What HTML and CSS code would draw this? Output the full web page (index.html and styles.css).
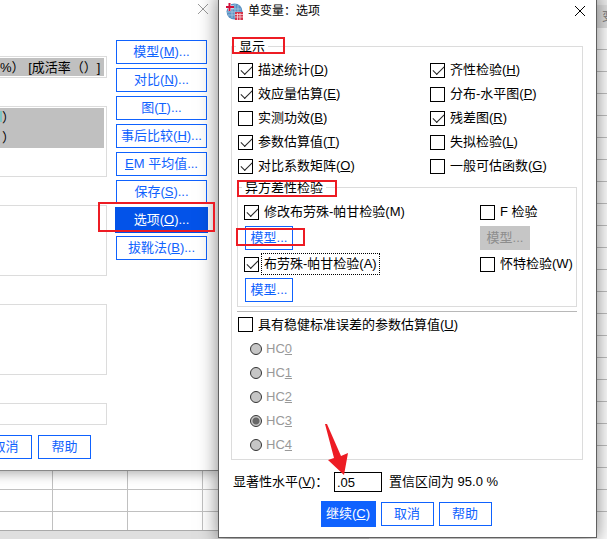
FILE: index.html
```html
<!DOCTYPE html>
<html lang="zh-CN">
<head>
<meta charset="utf-8">
<title>单变量：选项</title>
<link rel="stylesheet" href="styles.css">
</head>
<body>
<div class="desktop">
  <div class="sheet"><div class="sheet-head">变</div><div class="sheet-rows"></div><div class="sheet-foot"></div></div>
  <div class="side-rows"></div>

  <section class="window parent">
    <header class="parent-title">
      <button class="close muted" aria-label="关闭"><svg viewBox="0 0 12 12"><path d="M1 1l10 10M11 1L1 11"/></svg></button>
    </header>
    <div class="parent-body">
      <div class="fields">
        <div class="box single"><div class="hl">%） [成活率（）]</div></div>
        <div class="box factors"><div class="hl"><span class="teal"></span>）</div><div class="hl">）</div></div>
        <div class="box covariates"></div>
        <div class="box random"></div>
        <div class="box single weight"></div>
      </div>
      <nav class="actions">
        <button class="btn">模型(<u>M</u>)...</button>
        <button class="btn">对比(<u>N</u>)...</button>
        <button class="btn">图(<u>T</u>)...</button>
        <button class="btn">事后比较(<u>H</u>)...</button>
        <button class="btn"><u>E</u>M 平均值...</button>
        <button class="btn">保存(<u>S</u>)...</button>
        <button class="btn active">选项(<u>O</u>)...</button>
        <button class="btn">拔靴法(<u>B</u>)...</button>
      </nav>
    </div>
    <footer class="parent-foot"><button class="btn small">取消</button><button class="btn small">帮助</button></footer>
  </section>

  <section class="window dialog">
    <header class="title">
      <svg class="logo" viewBox="0 0 17 17"><circle cx="8.500" cy="8.500" r="8" fill="#5b93c4"/><path d="M2 6h13M1 9h14M2 12h12M6 3v12M9 1v14M12 2v12" stroke="#a9c8e2" stroke-width=".8" fill="none"/><path d="M9 9h8v8H9z" fill="#d3354b"/><path d="M9 11.500h8M9 14h8M11.500 10v7M14 10v7" stroke="#f7d5da" stroke-width=".8"/><path d="M3.500 0v8M0 4h8" stroke="#fff" stroke-width="3"/><path d="M3.500 0v8M0 4h8" stroke="#d0103a" stroke-width="2"/></svg>
      <h1>单变量：选项</h1>
      <button class="close" aria-label="关闭"><svg viewBox="0 0 12 12"><path d="M1 1l10 10M11 1L1 11"/></svg></button>
    </header>
    <form class="form">
      <fieldset class="group display">
        <legend>显示</legend>
        <div class="checks">
          <label class="opt"><input type="checkbox" checked>描述统计(<u>D</u>)</label>
          <label class="opt"><input type="checkbox" checked>齐性检验(<u>H</u>)</label>
          <label class="opt"><input type="checkbox" checked>效应量估算(<u>E</u>)</label>
          <label class="opt"><input type="checkbox">分布-水平图(<u>P</u>)</label>
          <label class="opt"><input type="checkbox">实测功效(<u>B</u>)</label>
          <label class="opt"><input type="checkbox" checked>残差图(<u>R</u>)</label>
          <label class="opt"><input type="checkbox" checked>参数估算值(<u>T</u>)</label>
          <label class="opt"><input type="checkbox">失拟检验(<u>L</u>)</label>
          <label class="opt"><input type="checkbox" checked>对比系数矩阵(<u>O</u>)</label>
          <label class="opt"><input type="checkbox">一般可估函数(<u>G</u>)</label>
        </div>
        <fieldset class="group hetero">
          <legend>异方差性检验</legend>
          <div class="tests">
            <label class="opt"><input type="checkbox" checked>修改布劳殊-帕甘检验(M)</label>
            <label class="opt"><input type="checkbox">F 检验</label>
            <button type="button" class="btn model">模型...</button>
            <button type="button" class="btn model off" disabled>模型...</button>
            <label class="opt"><input type="checkbox" checked><span class="focused">布劳殊-帕甘检验(A)</span></label>
            <label class="opt"><input type="checkbox">怀特检验(W)</label>
            <button type="button" class="btn model">模型...</button>
          </div>
        </fieldset>
        <hr>
        <label class="opt robust"><input type="checkbox">具有稳健标准误差的参数估算值(<u>U</u>)</label>
        <div class="radios">
          <label class="opt"><input type="radio" name="hc" disabled>HC<u>0</u></label>
          <label class="opt"><input type="radio" name="hc" disabled>HC<u>1</u></label>
          <label class="opt"><input type="radio" name="hc" disabled>HC<u>2</u></label>
          <label class="opt"><input type="radio" name="hc" disabled checked>HC<u>3</u></label>
          <label class="opt"><input type="radio" name="hc" disabled>HC<u>4</u></label>
        </div>
      </fieldset>
      <div class="level"><label for="sig">显著性水平(<u>V</u>)：</label><input id="sig" type="text" value=".05"><span>置信区间为 95.0 %</span></div>
      <div class="buttons"><button type="button" class="btn primary">继续(<u>C</u>)</button><button type="button" class="btn small">取消</button><button type="button" class="btn small">帮助</button></div>
    </form>
  </section>

  <div class="mark mark-options"></div>
  <div class="mark mark-display"></div>
  <div class="mark mark-hetero"></div>
  <div class="mark mark-model"></div>
  <svg class="arrow" viewBox="0 0 23 52"><path d="M0 0H2L16 32L23 29L19 51L3 36L9 34Z" fill="#ed1c24"/></svg>
</div>
</body>
</html>
```
FILE: styles.css
```css
* { box-sizing: border-box; }
body { margin: 0; text-spacing-trim: space-all; }
body, button, input { font: 13px/16px "Liberation Sans", "Noto Sans CJK SC", sans-serif; color: #000; }
.desktop { position: relative; height: 100vh; overflow: hidden; background: #fff; }

.sheet { height: 100%; display: flex; flex-direction: column; }
.sheet-head { height: 28px; padding: 4px 0 0 602px; border-top: 5px solid #eee; background: #e0e0e0; color: #777; white-space: nowrap; font-size: 12px; }
.sheet-rows { flex: 1; background:
  repeating-linear-gradient(to bottom, transparent 0 21px, #c0c0c0 21px 22px),
  repeating-linear-gradient(to right, transparent 0 74px, #c0c0c0 74px 75px) -22px 0; }
.sheet-foot { height: 9px; background: #dfdfdf; border-top: 1px solid #aaa; }
.side-rows { position: absolute; left: 369px; right: 0; top: 28px; bottom: 0;
  background: repeating-linear-gradient(to bottom, #fff 0 21px, #c0c0c0 21px 22px) 0 0 / 100% 484px no-repeat, #fff; }

.window { position: absolute; background: #fff; }
.parent { left: -40px; top: -20px; width: 259px; height: 491px; border-bottom: 1px solid #888; box-shadow: 0 2px 12px rgba(0, 0, 0, .35); padding-left: 40px; }
.parent-title { display: flex; justify-content: flex-end; padding: 23px 10px 0 0; height: 60px; }
.close { border: 0; padding: 0; background: none; width: 12px; height: 12px; }
.close svg { display: block; width: 12px; height: 12px; stroke: #000; stroke-width: 1; fill: none; }
.muted svg { stroke: #999; }
.parent-body { display: flex; gap: 9px; }
.fields { width: 107px; padding-top: 16px; display: flex; flex-direction: column; }
.box { border: 1px solid #dcdcdc; border-left: 0; padding: 1px 2px 1px 0; }
.single { height: 22px; }
.hl { background: #c0c0c0; height: 20px; line-height: 20px; padding-left: 2px; white-space: nowrap; overflow: hidden; }
.single .hl { height: 18px; padding-left: 0; }
.factors { height: 71px; margin-top: 28px; }
.teal { display: inline-block; width: 2px; height: 11px; margin-left: -2px; background: #7fc4c4; }
.covariates { height: 71px; margin-top: 28px; }
.random { height: 71px; margin-top: 28px; }
.weight { margin-top: 28px; }
.actions { width: 91px; display: grid; gap: 4px; align-content: start; }
.btn { height: 24px; border: 1px solid #0f62fe; background: #fff; color: #0f62fe; padding: 0; white-space: nowrap; }
.active { background: #0353e9; border-color: #0353e9; color: #fff; outline: 1px solid #0353e9; }
.small { width: 53px; }
.parent-foot { display: flex; gap: 6px; margin: 10px 0 0 -21px; }

.dialog { left: 218px; top: -8px; width: 379px; height: 546px; border: 1px solid #606060; box-shadow: 0 2px 18px rgba(0, 0, 0, .5); }
.title { display: flex; align-items: center; height: 44px; padding: 0 10px 8px 7px; gap: 5px; }
.title h1 { flex: 1; margin: 0; font-size: 12px; font-weight: 400; }
.logo { width: 17px; height: 17px; }
.form { padding: 0 13px 0 12px; }
.group { margin: 0; min-width: 0; border: 1px solid #dcdcdc; padding: 0; }
.group legend { margin-left: 4px; padding: 2px 3px 0; line-height: 16px; }
.display { padding: 3px 5px 0; }
.display > legend { margin-left: -1px; }
.checks { display: grid; grid-template-columns: 192px 1fr; grid-auto-rows: 24px; }
.opt { display: flex; align-items: center; white-space: nowrap; }
input[type=checkbox], input[type=radio] { appearance: none; margin: 0 5px 0 1px; width: 15px; height: 15px; flex: none; border: 1px solid #000; background: #fff; }
input[type=checkbox]:checked { position: relative; }
input[type=checkbox]:checked::after { content: ""; position: absolute; left: 2px; top: 2px; width: 10px; height: 5px; border: solid #222; border-width: 0 0 1px 1px; transform: rotate(-45deg); }
.hetero { height: 129px; }
.tests { display: grid; grid-template-columns: 236px 1fr; grid-template-rows: 28px 24px 28px 24px; padding: 2px 0 0 5px; }
.tests .model { width: 48px; margin-left: 2px; }
.tests .off { width: 50px; margin-left: 1px; background: #c6c6c6; border-color: #c6c6c6; color: #8d8d8d; }
.focused { outline: 1px dotted #000; outline-offset: 2px; }
hr { margin: 4px 0 0; border: 0; border-top: 1px solid #b8b8b8; }
.robust { height: 25px; }
.radios { display: grid; grid-auto-rows: 24px; padding: 0 0 2px 12px; color: #999; }
input[type=radio] { width: 12px; height: 12px; margin: 0 4px 0 1px; border-radius: 50%; border-color: #333; background: #c6c6c6; }
input[type=radio]:checked { background: radial-gradient(circle, #666 0 3px, #c6c6c6 4px); }
.level { display: flex; align-items: center; gap: 7px; padding: 12px 0 0 2px; white-space: nowrap; }
.level label { width: 94px; }
.level input { width: 48px; height: 20px; border: 1px solid #000; padding: 0 2px; }
.buttons { display: flex; justify-content: center; align-items: center; gap: 5px; margin-top: 9px; padding-right: 2px; }
.primary { width: 55px; height: 26px; background: #0f62fe; color: #fff; }

.mark { position: absolute; border: 2px solid #ed1c24; }
.mark-options { left: 98px; top: 202px; width: 117px; height: 30px; }
.mark-display { left: 232px; top: 37px; width: 53px; height: 17px; }
.mark-hetero { left: 237px; top: 180px; width: 100px; height: 17px; }
.mark-model { left: 236px; top: 228px; width: 69px; height: 18px; }
.arrow { position: absolute; left: 325px; top: 424px; width: 23px; height: 52px; }
```
